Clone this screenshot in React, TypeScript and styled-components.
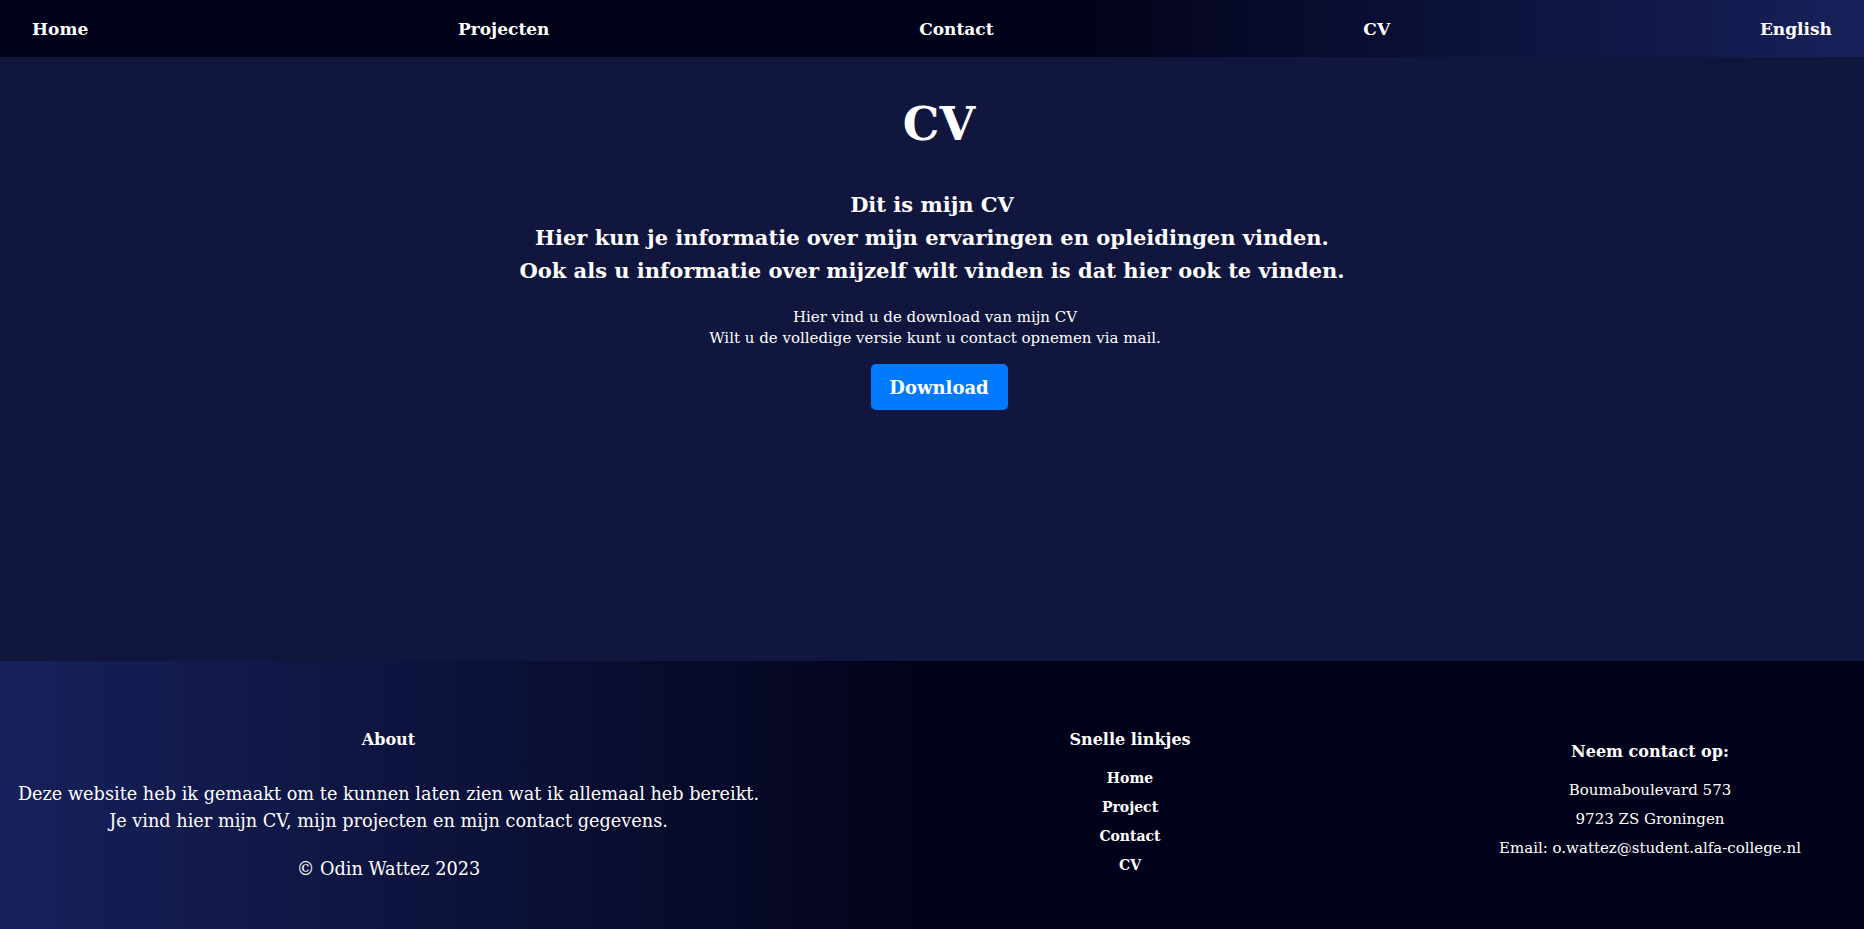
import React from 'react';
import styled, { createGlobalStyle } from 'styled-components';

const GlobalStyle = createGlobalStyle`
  html, body {
    margin: 0;
    padding: 0;
  }

  body {
    background: #02031a;
    color: #fff;
    font-family: 'DejaVu Serif', 'Liberation Serif', serif;
  }
`;

// Styles

const Nav = styled.nav`
  height: 57px;
  padding: 0 32px;
  display: flex;
  align-items: center;
  justify-content: space-between;
  background: linear-gradient(90deg, #02031a 0%, #02031a 58%, #17215b 100%);
`;

const NavLink = styled.a`
  color: #fff;
  font-weight: bold;
  font-size: 17px;
  text-decoration: none;
`;

const Main = styled.main`
  min-height: 604px;
  box-sizing: border-box;
  padding-top: 35px;
  background: #10163d;
  display: flex;
  flex-direction: column;
  align-items: center;
  text-align: center;
`;

const Title = styled.h1`
  margin: 0 0 0 14px;
  font-size: 46px;
  line-height: 64px;
  font-weight: bold;
`;

const Intro = styled.h2`
  margin: 32px 0 0;
  font-size: 21px;
  line-height: 33px;
  font-weight: bold;
`;

const Note = styled.p`
  margin: 20px 0 0 6px;
  font-size: 15px;
  line-height: 21px;
`;

const DownloadButton = styled.button`
  margin: 15px 0 0 14px;
  width: 137px;
  height: 46px;
  border: none;
  border-radius: 5px;
  background: #007bff;
  color: #fff;
  font-family: inherit;
  font-weight: bold;
  font-size: 18px;
  cursor: pointer;
`;

const Footer = styled.footer`
  height: 268px;
  display: grid;
  grid-template-columns: 777px 706px 1fr;
  background: linear-gradient(90deg, #17215b 0%, #02031a 50%, #02031a 100%);
  text-align: center;
`;

const Column = styled.div<{ $top: number; $right?: number }>`
  padding-top: ${(p) => p.$top}px;
  padding-right: ${(p) => p.$right ?? 0}px;
`;

const ColumnTitle = styled.h3`
  margin: 0;
  font-size: 16px;
  line-height: 24px;
  font-weight: bold;
`;

const AboutText = styled.p`
  margin: 29px 0 0;
  font-size: 17.7px;
  line-height: 27px;
`;

const Copyright = styled.p`
  margin: 21px 0 0;
  font-size: 17.7px;
  line-height: 27px;
`;

const LinkList = styled.ul`
  list-style: none;
  margin: 16px 0 0;
  padding: 0;
  display: flex;
  flex-direction: column;
  gap: 9px;
`;

const FooterLink = styled.a`
  color: #fff;
  font-weight: bold;
  font-size: 14px;
  line-height: 20px;
  text-decoration: none;
`;

const ContactLine = styled.p`
  margin: 0;
  font-size: 15px;
  line-height: 29px;
`;

const ContactList = styled.div`
  margin-top: 12px;
`;

const navItems = ['Home', 'Projecten', 'Contact', 'CV', 'English'];
const quickLinks = ['Home', 'Project', 'Contact', 'CV'];

function App(): JSX.Element {
  return (
    <>
      <GlobalStyle />
      <Nav>
        {navItems.map((item) => (
          <NavLink key={item} href="#">
            {item}
          </NavLink>
        ))}
      </Nav>
      <Main>
        <Title>CV</Title>
        <Intro>
          Dit is mijn CV
          <br />
          Hier kun je informatie over mijn ervaringen en opleidingen vinden.
          <br />
          Ook als u informatie over mijzelf wilt vinden is dat hier ook te vinden.
        </Intro>
        <Note>
          Hier vind u de download van mijn CV
          <br />
          Wilt u de volledige versie kunt u contact opnemen via mail.
        </Note>
        <DownloadButton type="button">Download</DownloadButton>
      </Main>
      <Footer>
        <Column $top={67}>
          <ColumnTitle>About</ColumnTitle>
          <AboutText>
            Deze website heb ik gemaakt om te kunnen laten zien wat ik allemaal heb bereikt.
            <br />
            Je vind hier mijn CV, mijn projecten en mijn contact gegevens.
          </AboutText>
          <Copyright>© Odin Wattez 2023</Copyright>
        </Column>
        <Column $top={67}>
          <ColumnTitle>Snelle linkjes</ColumnTitle>
          <LinkList>
            {quickLinks.map((item) => (
              <li key={item}>
                <FooterLink href="#">{item}</FooterLink>
              </li>
            ))}
          </LinkList>
        </Column>
        <Column $top={79} $right={47}>
          <ColumnTitle>Neem contact op:</ColumnTitle>
          <ContactList>
            <ContactLine>Boumaboulevard 573</ContactLine>
            <ContactLine>9723 ZS Groningen</ContactLine>
            <ContactLine>Email: o.wattez@student.alfa-college.nl</ContactLine>
          </ContactList>
        </Column>
      </Footer>
    </>
  );
}

export default App;
